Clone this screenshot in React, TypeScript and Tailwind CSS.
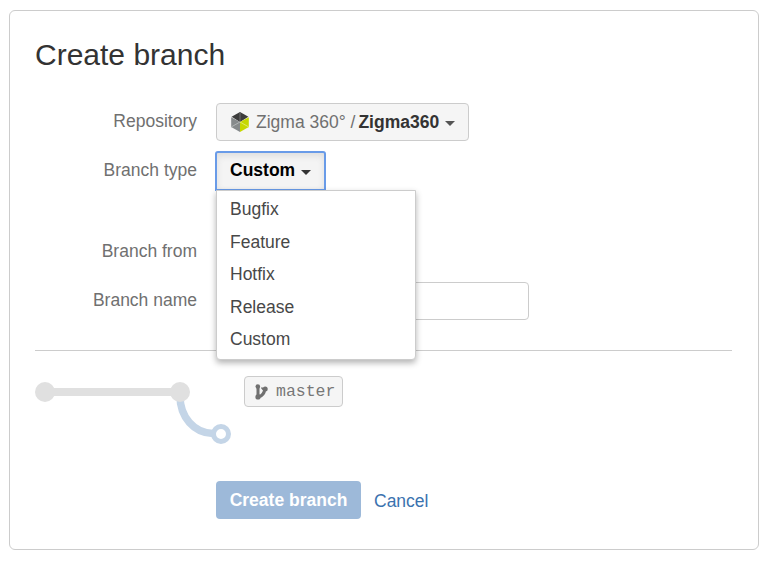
import React from "react";

const branchTypes = ["Bugfix", "Feature", "Hotfix", "Release", "Custom"];

function Caret({ className = "" }: { className?: string }) {
  return (
    <svg width="10" height="5" viewBox="0 0 10 5" className={className}>
      <path d="M0 0h10L5 5z" fill="currentColor" />
    </svg>
  );
}

function RepoLogo() {
  return (
    <svg width="18" height="20" viewBox="0 0 18 20" className="shrink-0">
      <path d="M9 0L17.4 4.800 9 10 .6 4.800z" fill="#3c3c3c" />
      <path d="M.2 5.200L9 10v10L.2 15z" fill="#868a8b" />
      <path d="M17.8 5.200L9 10v10l8.800-5z" fill="#c6d800" />
      <path d="M9 0v10" stroke="#707070" strokeWidth="1" />
      <path d="M9 10L.2 15" stroke="#b2b5b5" strokeWidth="1" />
      <path d="M9 10l8.800 5" stroke="#deea6b" strokeWidth="1" />
    </svg>
  );
}

function BranchIcon() {
  return (
    <svg width="13" height="16" viewBox="0 0 13 16" className="shrink-0" fill="none" stroke="#707070">
      <path d="M3 3v10M3.500 12.800C7 12 9.300 10 9.800 5" strokeWidth="3" />
      <circle cx="2.800" cy="2.500" r="2.300" fill="#707070" stroke="none" />
      <circle cx="3" cy="12.900" r="2.600" fill="#707070" stroke="none" />
      <circle cx="10.200" cy="5" r="2.500" fill="#707070" stroke="none" />
      <path d="M6.500 3.500L9 6.500" strokeWidth="1.500" />
    </svg>
  );
}

function Label({ children }: { children: React.ReactNode }) {
  return <div className="mr-[19px] w-[162px] shrink-0 text-right leading-9 text-[#707070]">{children}</div>;
}

export default function App() {
  return (
    <div className="h-[561px] bg-white pt-[10px] pl-[9px] font-['Liberation_Sans',Arial,sans-serif] text-[17.5px]">
      <main className="flex h-[540px] w-[750px] flex-col rounded-[6px] border border-[#ccc] pr-[26px] pl-[25px]">
        <h1 className="mt-[26px] text-[30px] leading-9 text-[#333]">Create branch</h1>
        <div className="mt-[30px] flex h-[38px]">
          <Label>Repository</Label>
          <button className="flex h-[38px] w-[253px] items-center rounded-[4px] border border-[#ccc] bg-[#f5f5f5] pl-[14px] whitespace-nowrap text-[#333]">
            <RepoLogo />
            <span className="ml-[7px] text-[#707070]">Zigma 360° /</span>
            <b className="ml-[3px]">Zigma360</b>
            <Caret className="mt-[3px] ml-[6px] text-[#555]" />
          </button>
        </div>
        <div className="mt-[11px] flex h-[38px]">
          <Label>Branch type</Label>
          <div className="relative">
            <button className="-mt-px -ml-px flex h-[40px] w-[111px] items-center rounded-t-[3px] border-2 border-[#699be8] bg-[#f4f4f4] pb-px pl-[13px] font-bold text-black shadow-[inset_0_3px_6px_#ddd]">
              Custom
              <Caret className="mt-[3px] ml-[6px] text-[#333]" />
            </button>
            <ul className="absolute top-[38px] left-0 z-10 h-[170px] w-[200px] rounded-b-[4px] border border-[#ccc] bg-white pt-[2px] pl-[13px] text-[#484848] shadow-[0_3px_6px_rgba(0,0,0,0.3)]">
              {branchTypes.map((type) => (
                <li key={type} className="h-[32.5px] leading-[33px]">
                  {type}
                </li>
              ))}
            </ul>
          </div>
        </div>
        <div className="mt-[43px] flex h-[38px]">
          <Label>Branch from</Label>
        </div>
        <div className="mt-[11px] flex h-[38px]">
          <Label>Branch name</Label>
          <input aria-label="Branch name" className="w-[313px] rounded-[4px] border border-[#ccc] bg-white" />
        </div>
        <hr className="mt-[30px] border-[#ccc]" />
        <div className="mt-[25px] flex h-[74px]">
          <svg width="209" height="74" viewBox="0 0 209 74" fill="none">
            <path d="M10 16h135" stroke="#e0e0e0" strokeWidth="8" />
            <path d="M145 20c0 21 14 37 33 37.500" stroke="#c4d5e7" strokeWidth="7.500" />
            <circle cx="10" cy="16" r="10" fill="#e0e0e0" />
            <circle cx="145" cy="16" r="10" fill="#e0e0e0" />
            <circle cx="186" cy="58" r="7.500" fill="white" stroke="#c4d5e7" strokeWidth="5" />
          </svg>
          <div className="flex h-[31px] w-[99px] items-center rounded-[4px] border border-[#ccc] bg-[#f5f5f5] pl-[10px] font-['Liberation_Mono','Courier_New',monospace] text-[16.5px] text-[#777]">
            <BranchIcon />
            <span className="mt-[2px] ml-[8px]">master</span>
          </div>
        </div>
        <div className="mt-[31px] ml-[181px] flex h-[38px]">
          <button className="w-[145px] rounded-[4px] bg-[#9db9d9] font-bold whitespace-nowrap text-white">
            Create branch
          </button>
          <a className="ml-[13px] leading-[40px] text-[#3b73af]">Cancel</a>
        </div>
      </main>
    </div>
  );
}
